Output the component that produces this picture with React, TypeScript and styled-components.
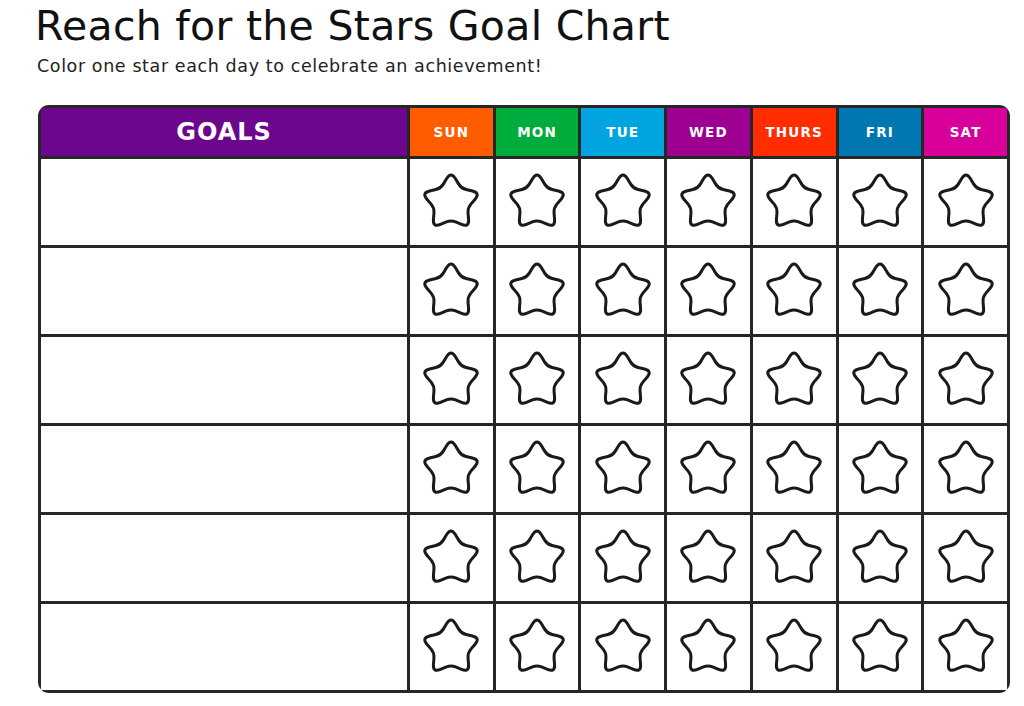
import styled, { createGlobalStyle } from "styled-components";

const days = [
    { label: "SUN", color: "#ff5c00" },
    { label: "MON", color: "#00ad3c" },
    { label: "TUE", color: "#00a4e1" },
    { label: "WED", color: "#9d0090" },
    { label: "THURS", color: "#ff2d00" },
    { label: "FRI", color: "#0077b1" },
    { label: "SAT", color: "#d8009b" },
];

const ROWS = 6;

// builds a star outline whose points and valleys are softened with quadratic curves
const starPath = (cx: number, cy: number, R: number, r: number, t: number) => {
    const pts: [number, number][] = [];
    for (let i = 0; i < 10; i++) {
        const rad = i % 2 === 0 ? R : r;
        const a = -Math.PI / 2 + (i * Math.PI) / 5;
        pts.push([cx + rad * Math.cos(a), cy + rad * Math.sin(a)]);
    }
    const lerp = (p: [number, number], q: [number, number], k: number) =>
        [p[0] + (q[0] - p[0]) * k, p[1] + (q[1] - p[1]) * k] as [number, number];
    let d = "";
    for (let i = 0; i < 10; i++) {
        const prev = pts[(i + 9) % 10];
        const cur = pts[i];
        const next = pts[(i + 1) % 10];
        const k = i % 2 === 0 ? t : t * 0.6;
        const a = lerp(cur, prev, k);
        const b = lerp(cur, next, k);
        d += `${i === 0 ? "M" : "L"}${a[0].toFixed(2)} ${a[1].toFixed(2)} Q${cur[0].toFixed(2)} ${cur[1].toFixed(2)} ${b[0].toFixed(2)} ${b[1].toFixed(2)} `;
    }
    return d + "Z";
};

const STAR = starPath(30, 31.5, 31, 17.5, 0.42);

const GlobalStyle = createGlobalStyle`
    body {
        margin: 0;
        background: #fff;
        font-family: "DejaVu Sans", sans-serif;
    }
`;

const Page = styled.div`
    width: 1024px;
    height: 706px;
    padding: 0 0 0 35px;
    box-sizing: border-box;
    overflow: hidden;
`;

const Title = styled.h1`
    margin: 0;
    padding-top: 3px;
    font-family: "DejaVu Sans", sans-serif;
    font-weight: 400;
    font-size: 41px;
    line-height: 46px;
    color: #111;
    letter-spacing: 0.3px;
`;

const Subtitle = styled.p`
    margin: 6px 0 0 2px;
    font-family: "DejaVu Sans", sans-serif;
    font-size: 17.5px;
    line-height: 22px;
    color: #222;
    letter-spacing: 0.6px;
`;

const Chart = styled.div`
    margin: 28px 0 0 3px;
    width: 972px;
    display: grid;
    grid-template-columns: 366px repeat(7, 1fr);
    grid-template-rows: 48px repeat(${ROWS}, 86px);
    gap: 3px;
    padding: 3px;
    box-sizing: border-box;
    background: #262626;
    border-radius: 11px;
    overflow: hidden;
`;

const HeadCell = styled.div<{ $bg: string }>`
    background: ${(p) => p.$bg};
    color: #fff;
    display: flex;
    align-items: center;
    justify-content: center;
    font-family: "DejaVu Sans", sans-serif;
    font-weight: 700;
`;

const GoalsHead = styled(HeadCell)`
    font-size: 24px;
    letter-spacing: 1px;
`;

const DayHead = styled(HeadCell)`
    font-size: 13.5px;
    letter-spacing: 1.2px;
`;

const GoalCell = styled.div`
    background: #fff;
`;

const StarCell = styled.div`
    background: #fff;
    display: flex;
    align-items: center;
    justify-content: center;
    padding-bottom: 3px;
`;

const StarIcon = () => (
    <svg width="60" height="60" viewBox="0 0 60 60">
        <path d={STAR} fill="none" stroke="#1a1a1a" strokeWidth="3" strokeLinejoin="round" />
    </svg>
);

const App = () => {
    return (
        <>
            <GlobalStyle />
            <Page>
                <Title>Reach for the Stars Goal Chart</Title>
                <Subtitle>Color one star each day to celebrate an achievement!</Subtitle>
                <Chart>
                    <GoalsHead $bg="#6c068c">GOALS</GoalsHead>
                    {days.map((d) => (
                        <DayHead key={d.label} $bg={d.color}>
                            {d.label}
                        </DayHead>
                    ))}
                    {Array.from({ length: ROWS }).map((_, r) => (
                        <>
                            <GoalCell key={`g${r}`} />
                            {days.map((d) => (
                                <StarCell key={`${r}${d.label}`}>
                                    <StarIcon />
                                </StarCell>
                            ))}
                        </>
                    ))}
                </Chart>
            </Page>
        </>
    );
};

export default App;
